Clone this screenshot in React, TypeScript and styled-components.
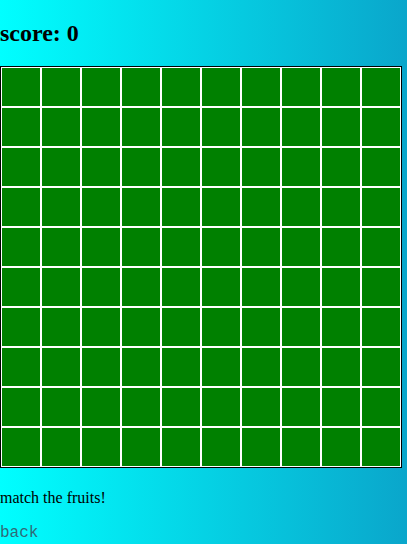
import styled, { createGlobalStyle } from 'styled-components';

const GlobalStyle = createGlobalStyle`
  html, body {
    margin: 0;
    padding: 0;
  }

  body {
    min-height: 544px;
    background: linear-gradient(to right, #00ffff, #0aa6cb);
    font-family: "Liberation Serif", "Times New Roman", serif;
    color: #000;
  }
`;

const SIZE = 10;

function App() {
  const cells = Array.from({ length: SIZE * SIZE }, (_, i) => i);

  return (
    <>
      <GlobalStyle />
      <StyledLayout>
        <StyledScore>score: 0</StyledScore>
        <StyledBoard>
          {cells.map((id) => (
            <StyledCell key={id} />
          ))}
        </StyledBoard>
        <StyledMessage>match the fruits!</StyledMessage>
        <StyledBack>back</StyledBack>
      </StyledLayout>
    </>
  );
}

export default App;

const StyledLayout = styled.div`
  display: flex;
  flex-direction: column;
  align-items: flex-start;
`;

const StyledScore = styled.h2`
  margin: 20px 0 19px;
  font-size: 24px;
  font-weight: bold;
  line-height: 27px;
`;

const StyledBoard = styled.div`
  width: 400px;
  display: grid;
  grid-template-columns: repeat(${SIZE}, 40px);
  border: 1px solid #000;
`;

const StyledCell = styled.div`
  width: 38px;
  height: 38px;
  background: #008000;
  border: 1px solid #fff;
`;

const StyledMessage = styled.p`
  margin: 21px 0 0;
  font-size: 16px;
  line-height: 18px;
`;

const StyledBack = styled.span`
  margin-top: 17px;
  font-family: "Liberation Mono", "Courier New", monospace;
  font-size: 16px;
  line-height: 18px;
  color: #2f6b78;
`;
